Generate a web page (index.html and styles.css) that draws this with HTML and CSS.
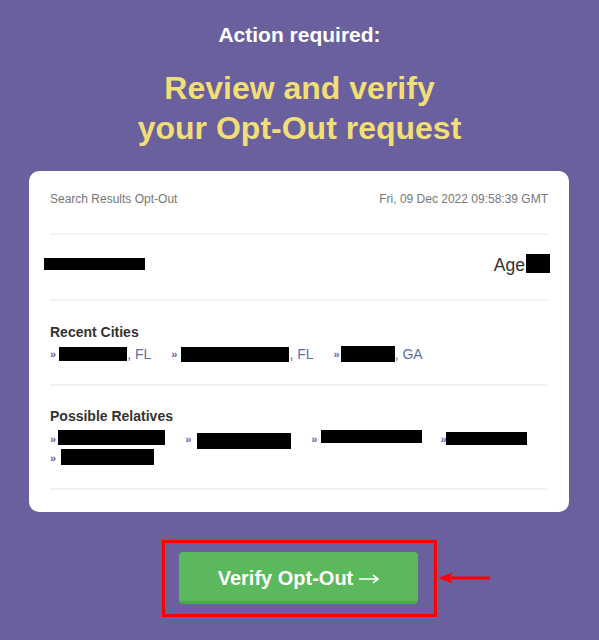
FILE: index.html
```html
<!DOCTYPE html>
<html>
<head>
<meta charset="utf-8">
<link rel="stylesheet" href="styles.css">
</head>
<body>
<div class="page">
  <div class="kicker">Action required:</div>
  <h1 class="title">Review and verify<br>your Opt-Out request</h1>
  <div class="card">
    <div class="row head">
      <span>Search Results Opt-Out</span>
      <span>Fri, 09 Dec 2022 09:58:39 GMT</span>
    </div>
    <div class="row person">
      <span class="redact name-box"></span>
      <span class="age"><span class="age-label">Age</span><span class="redact age-box"></span></span>
    </div>
    <div class="section cities">
      <div class="label">Recent Cities</div>
      <div class="items">
        <span class="item"><span class="raq">»</span><span class="redact" style="width:68px;height:14px;margin-left:1px"></span>, FL</span>
        <span class="item"><span class="raq">»</span><span class="redact" style="width:108px;height:15px;margin-left:2px"></span>, FL</span>
        <span class="item"><span class="raq">»</span><span class="redact" style="width:54px;height:16px;margin-left:-1px"></span>, GA</span>
      </div>
    </div>
    <div class="section relatives">
      <div class="label">Possible Relatives</div>
      <div class="items">
        <span class="item"><span class="raq">»</span><span class="redact" style="width:107px;height:15px"></span></span>
        <span class="item"><span class="raq">»</span><span class="redact" style="width:94px;height:16px;margin-left:4px;margin-top:3px"></span></span>
        <span class="item tight"><span class="raq">»</span><span class="redact" style="width:101px;height:13px;margin-left:2px"></span></span>
        <span class="item"><span class="raq">»</span><span class="redact" style="width:81px;height:13px;margin-left:-3px;margin-top:2px"></span></span>
      </div>
      <div class="items">
        <span class="item"><span class="raq">»</span><span class="redact" style="width:93px;height:16px;margin-left:3px"></span></span>
      </div>
    </div>
  </div>
  <div class="cta">
    <div class="highlight">
      <a class="btn">Verify Opt-Out <svg class="btn-arrow" width="20" height="10" viewBox="0 0 20 10"><path d="M0 5H18.5M14 1.2L19 5L14 8.8" fill="none" stroke="#ffffff" stroke-width="1.6"/></svg></a>
      <svg class="pointer" width="54" height="14" viewBox="0 0 54 14">
        <polygon points="0,7 15,1.5 12,5.5 52,5.5 52,8.5 12,8.5 15,12.5" fill="#ff0000"/>
      </svg>
    </div>
  </div>
</div>
</body>
</html>
```

FILE: styles.css
```css
html, body {
  margin: 0;
  padding: 0;
}
body {
  background: #6b609e;
  font-family: "Liberation Sans", Arial, sans-serif;
}
.page {
  width: 599px;
  height: 640px;
  padding-top: 23px;
  box-sizing: border-box;
}
.kicker {
  color: #ffffff;
  font-weight: bold;
  font-size: 21px;
  line-height: 24px;
  text-align: center;
}
.title {
  margin: 21px 0 0;
  color: #f2de76;
  font-weight: bold;
  font-size: 32px;
  line-height: 40px;
  text-align: center;
}
.card {
  margin: 23px 30px 0 29px;
  background: #ffffff;
  border-radius: 10px;
  padding: 0 21px 22px;
}
.row {
  display: flex;
  justify-content: space-between;
  align-items: center;
  border-bottom: 2px solid #f3f3f3;
}
.head {
  padding: 21px 0 27px;
  font-size: 12px;
  line-height: 14px;
  color: #777777;
}
.person {
  height: 57px;
  padding-bottom: 7px;
}
.redact {
  display: inline-block;
  background: #000000;
  vertical-align: middle;
}
.name-box {
  width: 101px;
  height: 12px;
  margin-left: -6px;
}
.age {
  display: flex;
  align-items: center;
  font-size: 17.5px;
  color: #333333;
  margin-right: -2px;
}
.age-label {
  padding-top: 3px;
}
.age-box {
  width: 24px;
  height: 19px;
  margin-left: 1px;
}
.section {
  border-bottom: 2px solid #f3f3f3;
  padding-top: 23px;
}
.cities {
  padding-bottom: 22px;
}
.relatives {
  padding-top: 22px;
  padding-bottom: 20px;
}
.label {
  font-weight: bold;
  font-size: 14px;
  line-height: 16px;
  color: #333333;
}
.cities .label {
  margin-bottom: 6px;
}
.relatives .label {
  margin-bottom: 6px;
}
.items {
  display: flex;
  font-size: 14px;
  line-height: 16px;
  color: #5b6fa5;
}
.relatives .items {
  height: 19px;
  align-items: flex-start;
}
.cities .items {
  align-items: center;
}
.item {
  display: inline-flex;
  align-items: center;
  margin-right: 20px;
}
.item.tight {
  margin-right: 18px;
}
.relatives .item {
  align-items: flex-start;
}
.relatives .raq {
  line-height: 19px;
}
.raq {
  color: #6a5fae;
  font-size: 11px;
  font-weight: bold;
  margin-right: 2px;
}
.cta {
  display: flex;
  justify-content: center;
  margin-top: 28px;
}
.highlight {
  position: relative;
  border: 3px solid #ff0000;
  padding: 9px 16px 10px 14px;
}
.btn {
  display: flex;
  align-items: center;
  justify-content: center;
  width: 239px;
  height: 46px;
  padding-top: 3px;
  background: #5cb85c;
  border-bottom: 3px solid #4ea84e;
  border-radius: 4px;
  color: #ffffff;
  font-weight: bold;
  font-size: 20px;
  text-decoration: none;
}
.btn-arrow {
  margin-left: 6px;
  margin-top: 1px;
}
.pointer {
  position: absolute;
  left: calc(100% + 4px);
  top: 28px;
}
```
